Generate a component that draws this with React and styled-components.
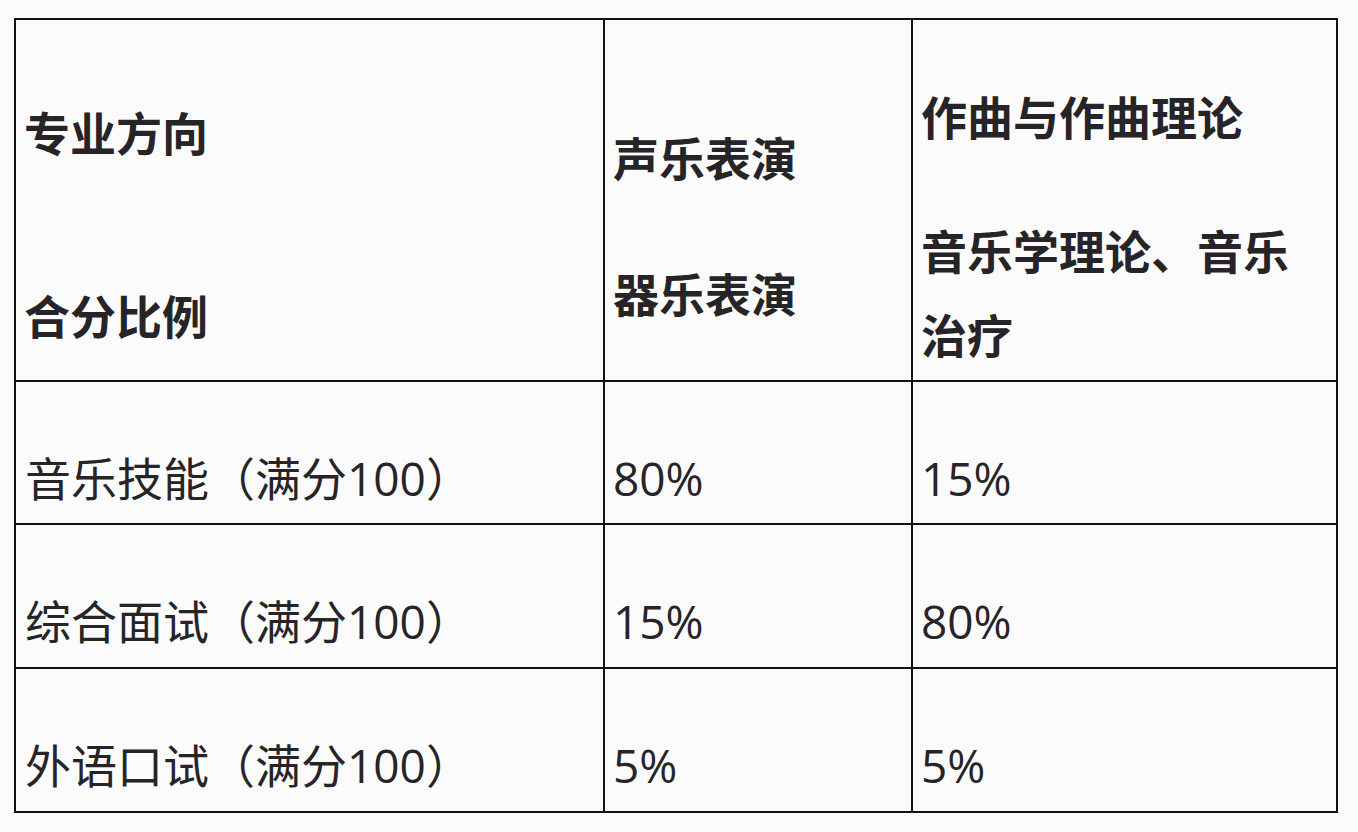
import styled, {createGlobalStyle} from "styled-components";

const Global = createGlobalStyle`
html, body {
    margin:0;
    padding:0;
    background:#fcfbfc;
}
`

const Page = styled.div`
padding:18px 0 0 14px;
width:1358px;
height:832px;
box-sizing:border-box;
background:#fcfbfc;
`

const Grid = styled.div`
display:grid;
grid-template-columns:587px 306px 423px;
grid-template-rows:360px 141px 142px 142px;
gap:2px;
padding:2px;
width:max-content;
background:#141214;
`

const Cell = styled.div`
background:#fcfbfc;
padding:0 8px 0 ${({$pad})=>$pad ?? 9}px;
color:#262426;
font-family:"Open Sans","Noto Sans CJK SC",sans-serif;
font-size:46px;
box-sizing:border-box;
overflow:hidden;
`

const HeadText = styled.p`
margin:0;
margin-top:${({$top})=>$top}px;
font-family:"Noto Sans CJK SC",sans-serif;
font-weight:700;
font-size:46px;
line-height:84px;
`

const BodyText = styled.p`
margin:0;
padding-top:63px;
line-height:66px;
white-space:nowrap;
`

const head = [
    [{text:"专业方向", top:69}, {text:"合分比例", top:99}],
    [{text:"声乐表演", top:94}, {text:"器乐表演", top:52}],
    [{text:"作曲与作曲理论", top:53}, {text:"音乐学理论、音乐治疗", top:50}],
]

const rows = [
    ["音乐技能（满分100）", "80%", "15%"],
    ["综合面试（满分100）", "15%", "80%"],
    ["外语口试（满分100）", "5%", "5%"],
]

export default function App(){
    return(
        <>
        <Global/>
        <Page>
            <Grid>
                {head.map((col,i)=>(
                    <Cell key={"h"+i} $pad={8}>
                        {col.map((p,j)=>(
                            <HeadText key={j} $top={p.top}>{p.text}</HeadText>
                        ))}
                    </Cell>
                ))}
                {rows.map((row,i)=>row.map((val,j)=>(
                    <Cell key={i+"-"+j} $pad={j==0?9:8}>
                        <BodyText>{val}</BodyText>
                    </Cell>
                )))}
            </Grid>
        </Page>
        </>
    )
}
